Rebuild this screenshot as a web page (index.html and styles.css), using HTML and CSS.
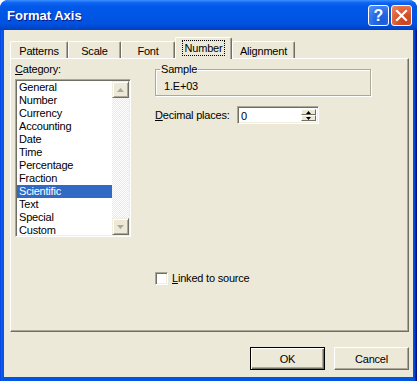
FILE: index.html
```html
<!DOCTYPE html>
<html>
<head>
<meta charset="utf-8">
<link rel="stylesheet" href="styles.css">
</head>
<body>
<div class="window">
  <div class="titlebar">
    <span class="title">Format Axis</span>
    <div class="tbtns">
      <span class="tbtn help">?</span>
      <span class="tbtn close"><svg width="13" height="13" viewBox="0 0 13 13"><path d="M2 2 L11 11 M11 2 L2 11" stroke="#fff" stroke-width="2.2" stroke-linecap="square"/></svg></span>
    </div>
  </div>
  <div class="client">
    <div class="tabs">
      <div class="tab w-pat">Patterns</div>
      <div class="tab w-scale">Scale</div>
      <div class="tab w-font">Font</div>
      <div class="tab sel w-num"><span class="focus">Number</span></div>
      <div class="tab w-align">Alignment</div>
    </div>
    <div class="panel">
      <div class="left">
        <div class="lbl"><u>C</u>ategory:</div>
        <div class="listbox">
          <ul class="items">
            <li>General</li>
            <li>Number</li>
            <li>Currency</li>
            <li>Accounting</li>
            <li>Date</li>
            <li>Time</li>
            <li>Percentage</li>
            <li>Fraction</li>
            <li class="selitem">Scientific</li>
            <li>Text</li>
            <li>Special</li>
            <li>Custom</li>
          </ul>
          <div class="vscroll">
            <div class="sbtn"><svg width="7" height="4" viewBox="0 0 7 4"><polygon points="3.5,0 7,4 0,4" fill="#ACA899"/></svg></div>
            <div class="track"></div>
            <div class="sbtn"><svg width="7" height="4" viewBox="0 0 7 4"><polygon points="0,0 7,0 3.5,4" fill="#ACA899"/></svg></div>
          </div>
        </div>
      </div>
      <div class="right">
        <fieldset class="group">
          <legend>Sample</legend>
          <div class="sample">1.E+03</div>
        </fieldset>
        <div class="decrow">
          <span class="declbl"><u>D</u>ecimal places:</span>
          <div class="spin">
            <span class="val">0</span>
            <div class="spinbtns">
              <div class="sb"><svg width="5" height="3" viewBox="0 0 5 3"><polygon points="2.5,0 5,3 0,3" fill="#000"/></svg></div>
              <div class="sb"><svg width="5" height="3" viewBox="0 0 5 3"><polygon points="0,0 5,0 2.5,3" fill="#000"/></svg></div>
            </div>
          </div>
        </div>
        <div class="check"><span class="cbox"></span><span><u>L</u>inked to source</span></div>
      </div>
    </div>
    <div class="footer">
      <button class="btn default">OK</button>
      <button class="btn">Cancel</button>
    </div>
  </div>
</div>
</body>
</html>
```

FILE: styles.css
```css
html, body {
  margin: 0;
  padding: 0;
  background: #fff;
}
body {
  font: 11px "Liberation Sans", Arial, sans-serif;
  letter-spacing: -0.2px;
  color: #000;
}
.window {
  width: 417px;
  height: 381px;
  box-sizing: border-box;
  background: linear-gradient(to right, #0831D9 0, #0A5FEE 1px, #0055E5 3px, #0055E5 413px, #0043CF 415px, #00138C 416px);
  border-radius: 8px 8px 0 0;
  display: flex;
  flex-direction: column;
  overflow: hidden;
}
.titlebar {
  height: 30px;
  flex: none;
  display: flex;
  align-items: center;
  justify-content: space-between;
  padding: 0 5px 0 7px;
  background: linear-gradient(180deg, #3D95FF 0px, #2A7CFB 1px, #0D62F0 3px, #0058E9 7px, #0055E5 16px, #0053E1 23px, #0049D3 27px, #003FBE 30px);
  border-radius: 8px 8px 0 0;
}
.title {
  color: #fff;
  font: bold 13px "Liberation Sans", Arial, sans-serif;
  letter-spacing: 0;
  text-shadow: 1px 1px #0A1883;
  padding-top: 1px;
}
.tbtns {
  display: flex;
  gap: 2px;
  padding-top: 1px;
}
.tbtn {
  width: 21px;
  height: 21px;
  box-sizing: border-box;
  border: 1px solid #fff;
  border-radius: 3px;
  display: flex;
  align-items: center;
  justify-content: center;
}
.help {
  background: radial-gradient(circle at 70% 80%, #1C5CDB 0, #2566E6 40%, #5594FA 100%);
  color: #fff;
  font: bold 16px "Liberation Sans", Arial, sans-serif;
  letter-spacing: 0;
}
.close {
  background: radial-gradient(circle at 70% 80%, #C6401A 0, #D8532B 40%, #EE8A66 100%);
}
.client {
  flex: 1;
  margin: 0 4px 4px 4px;
  background: #ECE9D8;
  padding: 7px 4px 7px 6px;
  display: flex;
  flex-direction: column;
}
.tabs {
  display: flex;
  align-items: flex-end;
  height: 21px;
  position: relative;
  z-index: 1;
}
.tab {
  height: 17px;
  box-sizing: border-box;
  border-top: 1px solid #fff;
  border-left: 1px solid #fff;
  border-right: 1px solid #716F64;
  box-shadow: inset -1px 0 #ACA899;
  border-radius: 2px 2px 0 0;
  display: flex;
  align-items: center;
  justify-content: center;
  padding-top: 1px;
  background: #ECE9D8;
}
.w-pat { width: 58px; }
.w-scale { width: 53px; }
.w-font { width: 54px; }
.w-num { width: 57px; }
.w-align { width: 63px; }
.tab.sel {
  height: 22px;
  margin-bottom: -1px;
  padding-top: 0;
  padding-bottom: 1px;
}
.focus {
  outline: 1px dotted #000;
  outline-offset: 1px;
  padding: 0 1px;
  line-height: 12px;
}
.panel {
  height: 274px;
  box-sizing: border-box;
  border-top: 1px solid #fff;
  border-left: 1px solid #fff;
  border-right: 1px solid #716F64;
  border-bottom: 1px solid #716F64;
  box-shadow: inset -1px -1px #ACA899;
  padding: 4px 0 0 4px;
  display: flex;
  gap: 24px;
}
.left {
  width: 116px;
  display: flex;
  flex-direction: column;
}
.lbl {
  line-height: 13px;
  margin-bottom: 3px;
}
.listbox {
  height: 158px;
  box-sizing: border-box;
  border-top: 1px solid #ACA899;
  border-left: 1px solid #ACA899;
  border-right: 1px solid #fff;
  border-bottom: 1px solid #fff;
  box-shadow: inset 1px 1px #716F64, inset -1px -1px #F1EFE2;
  background: #fff;
  padding: 1px;
  display: flex;
  overflow: hidden;
}
.items {
  list-style: none;
  margin: 0;
  padding: 0;
  flex: 1;
  overflow: hidden;
}
.items li {
  height: 13px;
  line-height: 13px;
  padding-left: 2px;
  white-space: nowrap;
}
.items li.selitem {
  background: #316AC5;
  color: #fff;
}
.vscroll {
  width: 17px;
  display: flex;
  flex-direction: column;
}
.sbtn {
  height: 17px;
  flex: none;
  box-sizing: border-box;
  background: #ECE9D8;
  border-top: 1px solid #F1EFE2;
  border-left: 1px solid #F1EFE2;
  border-right: 1px solid #716F64;
  border-bottom: 1px solid #716F64;
  box-shadow: inset 1px 1px #fff, inset -1px -1px #ACA899;
  display: flex;
  align-items: center;
  justify-content: center;
}
.track {
  flex: 1;
  background-color: #fff;
  background-image: conic-gradient(#ECE9D8 25%, #fff 0 50%, #ECE9D8 0 75%, #fff 0);
  background-size: 2px 2px;
}
.right {
  display: flex;
  flex-direction: column;
}
.group {
  width: 216px;
  box-sizing: border-box;
  margin: 0;
  border: 1px solid #ACA899;
  box-shadow: inset 1px 1px #fff, 1px 1px #fff;
  padding: 4px 8px 2px 8px;
  min-width: 0;
}
.group legend {
  padding: 0 1px;
  margin-left: -4px;
  line-height: 13px;
}
.sample {
  line-height: 13px;
}
.decrow {
  display: flex;
  align-items: center;
  margin-top: 10px;
}
.declbl {
  width: 82px;
  line-height: 13px;
}
.spin {
  width: 82px;
  height: 18px;
  box-sizing: border-box;
  border-top: 1px solid #ACA899;
  border-left: 1px solid #ACA899;
  border-right: 1px solid #fff;
  border-bottom: 1px solid #fff;
  box-shadow: inset 1px 1px #716F64, inset -1px -1px #F1EFE2;
  background: #fff;
  display: flex;
  align-items: stretch;
  padding: 2px 2px 2px 3px;
}
.val {
  flex: 1;
  line-height: 14px;
}
.spinbtns {
  width: 15px;
  display: flex;
  flex-direction: column;
}
.sb {
  flex: 1;
  box-sizing: border-box;
  background: #ECE9D8;
  border-top: 1px solid #fff;
  border-left: 1px solid #fff;
  border-right: 1px solid #716F64;
  border-bottom: 1px solid #716F64;
  display: flex;
  align-items: center;
  justify-content: center;
}
.check {
  display: flex;
  align-items: center;
  gap: 4px;
  margin-top: 148px;
  line-height: 13px;
}
.cbox {
  width: 13px;
  height: 13px;
  box-sizing: border-box;
  border-top: 1px solid #ACA899;
  border-left: 1px solid #ACA899;
  border-right: 1px solid #fff;
  border-bottom: 1px solid #fff;
  box-shadow: inset 1px 1px #716F64, inset -1px -1px #F1EFE2;
  background: #fff;
}
.footer {
  margin-top: 15px;
  display: flex;
  justify-content: flex-end;
  gap: 9px;
}
.btn {
  width: 75px;
  height: 23px;
  box-sizing: border-box;
  margin: 0;
  font: 11px "Liberation Sans", Arial, sans-serif;
  letter-spacing: -0.2px;
  color: #000;
  background: #ECE9D8;
  border-top: 1px solid #fff;
  border-left: 1px solid #fff;
  border-right: 1px solid #716F64;
  border-bottom: 1px solid #716F64;
  box-shadow: inset -1px -1px #ACA899;
  padding: 0;
}
.btn.default {
  border: 1px solid #000;
  box-shadow: inset 1px 1px #fff, inset -1px -1px #716F64, inset -2px -2px #ACA899;
}
```
